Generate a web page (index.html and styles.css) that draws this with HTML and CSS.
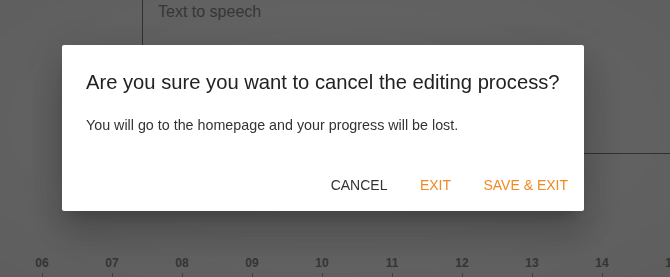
FILE: index.html
```html
<!DOCTYPE html>
<html lang="en">
<head>
  <meta charset="UTF-8" />
  <meta name="viewport" content="width=device-width, initial-scale=1" />
  <title>Editor</title>
  <link rel="stylesheet" href="styles.css">
</head>
<body>
  <div class="editor">
    <div class="side"></div>
    <div class="text-box">
      <div class="placeholder">Text to speech</div>
    </div>
  </div>

  <div class="timeline">
    <div class="tick">06</div>
    <div class="tick">07</div>
    <div class="tick">08</div>
    <div class="tick">09</div>
    <div class="tick">10</div>
    <div class="tick">11</div>
    <div class="tick">12</div>
    <div class="tick">13</div>
    <div class="tick">14</div>
    <div class="tick">15</div>
  </div>

  <div class="overlay">
    <div class="dialog">
      <h2 class="dialog-title">Are you sure you want to cancel the editing process?</h2>
      <p class="dialog-text">You will go to the homepage and your progress will be lost.</p>
      <div class="dialog-actions">
        <button class="btn">Cancel</button>
        <button class="btn primary">Exit</button>
        <button class="btn primary">Save &amp; Exit</button>
      </div>
    </div>
  </div>
</body>
</html>
```

FILE: styles.css
```css
* {
  box-sizing: border-box;
}

body {
  margin: 0;
  width: 670px;
  height: 277px;
  overflow: hidden;
  background: #fff;
  font-family: 'Liberation Sans', Arial, sans-serif;
  display: flex;
  flex-direction: column;
}

.editor {
  display: flex;
  height: 154px;
}

.side {
  width: 142px;
}

.text-box {
  flex: 1;
  border-left: 1px solid #808080;
  border-bottom: 1px solid #808080;
  padding: 3px 15px;
}

.placeholder {
  font-size: 16px;
  color: #8e8e8e;
}

.timeline {
  display: flex;
  margin-top: auto;
  padding-left: 7px;
  height: 21px;
}

.tick {
  flex: 0 0 70px;
  text-align: center;
  font-size: 12px;
  font-weight: bold;
  color: #8c8c8c;
  position: relative;
}

.tick::after {
  content: '';
  position: absolute;
  left: 35px;
  bottom: 0;
  width: 1px;
  height: 4px;
  background: #b0b0b0;
}

.overlay {
  position: fixed;
  inset: 0;
  background: radial-gradient(ellipse at 50% 45%, rgba(0, 0, 0, 0.6), rgba(0, 0, 0, 0.63));
  display: flex;
  align-items: flex-start;
  padding: 45px 0 0 62px;
}

.dialog {
  width: 522px;
  height: 166px;
  background: #fff;
  border-radius: 2px;
  box-shadow: 0 11px 15px -7px rgba(0, 0, 0, 0.2), 0 24px 38px 3px rgba(0, 0, 0, 0.14), 0 9px 46px 8px rgba(0, 0, 0, 0.12);
  display: flex;
  flex-direction: column;
  padding: 21px 0 8px;
}

.dialog-title {
  margin: 0;
  padding: 0 24px;
  font-size: 20.2px;
  font-weight: normal;
  line-height: 32px;
  color: #222;
}

.dialog-text {
  margin: 17px 0 0;
  padding: 0 24px;
  font-size: 14.3px;
  line-height: 20px;
  color: #333;
}

.dialog-actions {
  margin-top: auto;
  display: flex;
  justify-content: flex-end;
  padding: 0 8px;
}

.btn {
  min-width: 64px;
  height: 36px;
  padding: 0 8px;
  margin-left: 8px;
  border: none;
  background: none;
  font-family: inherit;
  font-size: 14px;
  text-transform: uppercase;
  color: #333;
  cursor: pointer;
}

.btn.primary {
  color: #f08a24;
}
```
